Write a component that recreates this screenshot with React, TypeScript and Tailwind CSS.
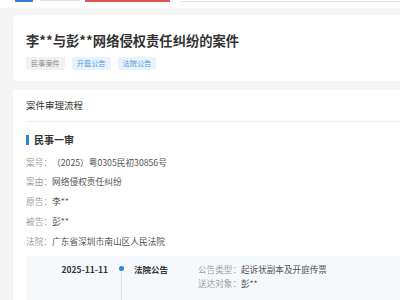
import React from "react";

const font = { fontFamily: '"Noto Sans CJK SC", "Noto Sans", sans-serif' };

function Row({ label, value }: { label: string; value: string }) {
  return (
    <div className="flex h-[19.8px] items-center text-[8.7px] leading-none">
      <span className="text-[#a0a0a0]">{label}：</span>
      <span className="text-[#555]">{value}</span>
    </div>
  );
}

export default function App() {
  return (
    <div className="w-[400px] h-[300px] overflow-hidden bg-[#f5f5f5]" style={font}>
      {/* header remnant */}
      <div className="h-[8px] bg-white flex items-start">
        <div className="ml-[15px] w-[18px] h-[2px] bg-[#2f7fd8] rounded-b-[1px]" />
        <div className="ml-[7px] w-[40px] h-[1px] bg-[#e0e0e0]" />
        <div className="ml-[5px] w-[85px] h-[2px] bg-[#e05555]" />
        <div className="ml-[10px] flex-1 h-[2px] border-b border-[#e6e6e6]" />
      </div>

      <div className="pl-[13px] pt-[7px]">
        {/* card 1 */}
        <div className="bg-white rounded-l-[3px] pl-[13px] pt-[16px] pb-[11px]">
          <div className="text-[13.3px] leading-[20px] font-semibold text-[#333]">
            李**与彭**网络侵权责任纠纷的案件
          </div>
          <div className="mt-[6px] flex gap-[7px]">
            <span className="h-[13px] px-[5px] flex items-center bg-[#f2f2f2] text-[#888] text-[7.2px] rounded-[2px]">
              民事案件
            </span>
            <span className="h-[13px] px-[5px] flex items-center bg-[#e8f3fd] text-[#4a9ae0] text-[7.2px] rounded-[2px]">
              开庭公告
            </span>
            <span className="h-[13px] px-[5px] flex items-center bg-[#e8f3fd] text-[#4a9ae0] text-[7.2px] rounded-[2px]">
              法院公告
            </span>
          </div>
        </div>

        {/* card 2 */}
        <div className="mt-[9px] bg-white rounded-l-[3px] pl-[13px]">
          <div className="h-[32px] flex items-center border-b border-[#f0f0f0] text-[9.5px] text-[#333]">
            案件审理流程
          </div>
          <div className="pt-[12px]">
            <div className="flex items-center h-[11px]">
              <div className="w-[3px] h-[10px] bg-[#2b86d9]" />
              <span className="ml-[5px] text-[10px] font-bold text-[#333] leading-none">民事一审</span>
            </div>
            <div className="mt-[8px]">
              <Row label="案号" value="（2025）粤0305民初30856号" />
              <Row label="案由" value="网络侵权责任纠纷" />
              <Row label="原告" value="李**" />
              <Row label="被告" value="彭**" />
              <Row label="法院" value="广东省深圳市南山区人民法院" />
            </div>
            <div className="mt-[4px] bg-[#f6f9fc] flex h-[60px]">
              <div className="w-[82px] pt-[8px] text-right text-[8.5px] leading-[10px] font-bold text-[#333]">
                2025-11-11
              </div>
              <div className="w-[26px] flex flex-col items-center pt-[10.5px]">
                <div className="w-[5px] h-[5px] rounded-full bg-[#2b86d9]" />
                <div className="w-[1px] flex-1 bg-[#dde3ea]" />
              </div>
              <div className="w-[64px] pt-[8px] text-[8.5px] leading-[10px] font-bold text-[#333]">
                法院公告
              </div>
              <div className="pt-[8px] text-[8.6px] leading-[10px]">
                <div>
                  <span className="text-[#a0a0a0]">公告类型：</span>
                  <span className="text-[#555]">起诉状副本及开庭传票</span>
                </div>
                <div className="mt-[4px]">
                  <span className="text-[#a0a0a0]">送达对象：</span>
                  <span className="text-[#555]">彭**</span>
                </div>
              </div>
            </div>
          </div>
        </div>
      </div>
    </div>
  );
}
